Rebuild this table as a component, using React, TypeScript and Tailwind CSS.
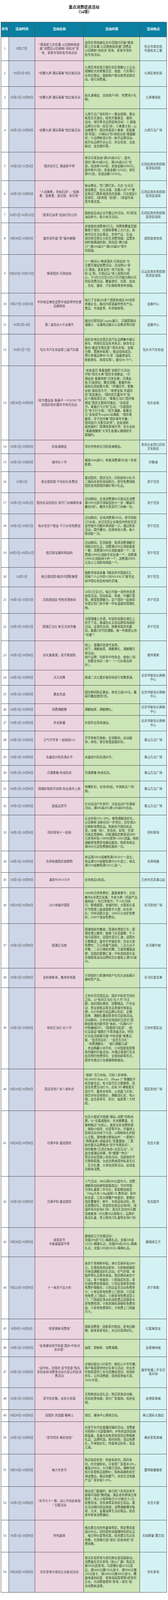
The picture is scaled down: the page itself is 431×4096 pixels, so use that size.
type Row = {
  d: string;
  n: string[];
  c: string[];
  l: string[];
  h: string;
};

const D8 = "10月1日-10月8日";
const HL = ["北京华联包头购物", "中心"];
const SG = ["石拐区商务和招商", "投资促进局"];
const QW = "青山万达广场";

const ROWS: Row[] = [
  {
    d: "9月27日",
    n: ["“情系职工办实事·以旧换新助发", "展”消费品以旧换新“进机关”家", "电、家装专项补贴专场活动"],
    c: ["会同东鸽电器在全市范围内开展“情系", "职工办实事·以旧换新助发展”消费品", "以旧换新“进机关”家电、家装专项补", "贴专场活动。"],
    l: ["包头市商务局", "市直机关工委"],
    h: "h-[61.2px]",
  },
  {
    d: "10月1日-8日",
    n: ["“欢腾九原 潮玩青春”商文娱活动"],
    c: ["九原区商务局已面向全区限额以上企业，", "规模较大的零售百货、商超、汽车等行", "业发出倡议，鼓励商户推出各类促销活", "动，吸引消费者。"],
    l: ["九原区商务局"],
    h: "h-[65.1px]",
  },
  {
    d: D8,
    n: ["“欢腾九原 潮玩青春”商文娱活动"],
    c: ["街头演唱会、全街商户9折、免费领小礼", "物。"],
    l: ["九原横竖街"],
    h: "h-[57.6px]",
  },
  {
    d: D8,
    n: ["“欢腾九原 潮玩青春”商文娱活动"],
    c: [
      "九原万达广场利用十一黄金假期，推出",
      "各类文艺演出，结合开展珠宝、服饰、",
      "运动、餐饮等全品类促销活动：① 超级",
      "品牌日计划—低至5折；②美食计划—心",
      "动美食节：国庆特惠双人套餐、家庭套",
      "餐7折起；③嗨玩计划-体验业态 储值翻",
      "倍；④品牌新锐计划—新开品牌活动，",
      "新开业品牌开业仪式、异业导流、业态",
      "联动、会员邀约等。",
    ],
    l: ["九原万达广场"],
    h: "h-[110.6px]",
  },
  {
    d: "10月1日-11月4日",
    n: ["国庆欢乐汇·满减享不停"],
    c: ["单次可享加油“满200减20元”；超市、", "餐饮“满100减10元、满200减20元”优", "惠，加油券1000张，发放金额20000元；", "超市券952张，发放金额13150元；餐饮", "券952张，发放金额13150元。"],
    l: SG,
    h: "h-[73.4px]",
  },
  {
    d: D8,
    n: ["“人间美食，寻味石拐”—“逛美", "景、尝美食、惠住宿、享乐购”"],
    c: ["联动景区，凭门票打折。凡在“五当召", "旅游景区、包头古城、花舞人间”3个景", "区购买门票参观游览的游客，可在我区8", "家餐饮、4家宾馆（民宿）、1家超市享", "受专属优惠。"],
    l: SG,
    h: "h-[68.8px]",
  },
  {
    d: "10月1日-10月31日",
    n: ["“惠享石油季”加油打折让利"],
    c: ["鼓励成品油企业开展让利活动，共5家加", "油站参与，助力本次活动。"],
    l: SG,
    h: "h-[39.2px]",
  },
  {
    d: "9月30日-10月6日",
    n: ["盛世迎华诞“芪”福共婵娟"],
    c: ["发放政府消费券8万元。消费券覆盖范围", "聚焦于餐饮、住宿和零售三大行业，具", "体涉及生活必需品、农特产品、石油、", "餐饮和住宿五大民生消费领域；设置多", "档阶梯满减机制，拟包括“满50减", "10”“满100减20”“满200减40”等不", "同层级。"],
    l: ["固阳县商务局"],
    h: "h-[81px]",
  },
  {
    d: "9月25日-10月15日",
    n: ["畅享国庆·乐购金秋"],
    c: ["十一期间以“畅享国庆·乐购金秋”为", "主题开展促销费活动，活动将以“多‘", "元’满减，惠享金秋” 线下促销、“金", "秋‘云’购，乐购白云”线上抢购为核", "心，于9月25日至10月15日开展为期20天", "的促消费活动，覆盖餐饮、住宿、加油", "、洗浴、健身、汽车换购等多种领域。"],
    l: ["白云区商务和招商", "投资促进局"],
    h: "h-[98.7px]",
  },
  {
    d: "9月27日-10月5日",
    n: ["中外商品博览会暨羊绒皮草特色食", "品展销会"],
    c: ["吸引了全球200多个国家和地区300余家", "参展企业，展出内容涵盖特色农产品、", "食品、羊绒皮草、外贸服装等。"],
    l: ["会展中心"],
    h: "h-[58.3px]",
  },
  {
    d: "10月3日-4日",
    n: ["第二届包头A卡动漫节"],
    c: ["展出内容包括Cosplay展示、汉服国潮动", "漫展示、动漫周边展示以及售卖等内容", "。"],
    l: ["会展中心"],
    h: "h-[46.9px]",
  },
  {
    d: "10月1日-7日",
    n: ["包头市汽车协会第三届汽车展"],
    c: ["组织本地及全国主流汽车品牌集中展示", "新车、热销车型及技术亮点；联合车企", "推出“展会专属优惠”（购车补贴、金融", "分期、置换补贴等），推动现场成交。", "预计参展品牌40-50 家（涵盖燃油车、", "新能源车、商用车等），展位60-70个。"],
    l: ["包头市汽车协会"],
    h: "h-[81px]",
  },
  {
    d: "9月30日-10月8日",
    n: ["“双节遇金街·青春不一YOUNG”中", "秋国庆奇妙嘉年华系列活动"],
    c: [
      "“金街逐月 青春留影”拍照打卡活动；",
      "中秋“拜月大典”国风专场晚会；“月",
      "满金街·青春饼韵”月饼长廊；月满金",
      "街·灯谜驿站；舞炫觉醒，青春炸场--",
      "高校社团街舞大赛；“声耀芳华，歌聚",
      "金街”高校音乐节；“筑梦金街 华诞同",
      "庆”巡游演出；“国庆欢乐嘉年华”街",
      "区人偶巡游互动；“青春正当红 国庆嗨",
      "唱会”国庆主题系列演出；“金街双",
      "节，青春打卡计划”互动；“为祖国庆",
      "生”电子打卡墙；“双节漫趣，青春次",
      "元”金街双节cosplay动漫展；“国庆青",
      "春季，学子创市集”国庆青年市集；“",
      "国风快闪·光影狂欢秀”；金街宠粉、",
      "高校福利！国潮电竞嗨不停；包头金街",
      "“青春微醺夜”大学生叁遛火塘酒吧专",
      "属福利。",
    ],
    l: ["包头金街"],
    h: "h-[190.3px]",
  },
  { d: D8, n: ["民俗演唱会"], c: ["举办传统老东河民俗演唱会。"], l: ["老包头走西口历史", "文化街区"], h: "h-[35px]" },
  { d: D8, n: ["城市红人节"], c: ["服装1000减50；单笔消费满500送一张电", "影票。"], l: ["印象城"], h: "h-[45.5px]" },
  {
    d: "10月1日",
    n: ["表白我的国-千份好礼免费送"],
    c: ["喜迎国庆，国庆当天，扫码商场小红书", "二维码并发布现场照片，即可免费领取", "国庆发饰即国庆胸针等小礼品。"],
    l: ["苏宁百货"],
    h: "h-[53.8px]",
  },
  {
    d: "10月1日-10月3日",
    n: ["国庆好运刮刮乐-双开门冰箱等你来"],
    c: ["活动期间，全场消费满99元珠宝区消费", "满1999元即可领取刮刮卡一张（最高可", "叠加3张），最终大奖双开门冰箱一台。"],
    l: ["苏宁百货"],
    h: "h-[54.1px]",
  },
  {
    d: "10月1日-10月3日",
    n: ["和水母交个朋友-千只水母免费送"],
    c: ["活动期间，全场消费满199元，即可领取", "1只水母，关注百货企业微信并转发百货", "宣传图片可额外再领取一只，通过转发", "活动，提升曝光，仅限单张小票，每人", "限领取一次。"],
    l: ["苏宁百货"],
    h: "h-[63.7px]",
  },
  {
    d: "10月1日-10月31日",
    n: ["假日珠宝福利再加码"],
    c: ["活动期间，百货联营、租赁消费满额可", "领取对应礼品，消费满2999元领取香薰", "一套；消费满5999元领取福袋一个；消", "费满12999元领取羊驼玩偶一个；消费满", "19999元领取榨汁杯一个；消费满29999", "元及以上领取电烤盘一个。"],
    l: ["苏宁百货"],
    h: "h-[73.6px]",
  },
  {
    d: "10月1日",
    n: ["表白我的国-微笑中国影像馆"],
    c: ["摄影师现场采集【微笑的中国面孔】，", "用每个人心中的“CHINA FACE”赋予这", "抹中国红有血有肉的灵魂。"],
    l: ["苏宁百货"],
    h: "h-[49.8px]",
  },
  {
    d: "10月1日-10月3日",
    n: ["古韵游园会 传统非遗体验"],
    c: ["10月1日至3日，每日开展一项传统非遗", "体验活动，包括拓染、串珠、竹编灯笼", "等，感受国潮魅力，这个国庆一起体验", "非遗文创门亲手做一件有温度的国潮礼", "物。"],
    l: ["苏宁百货"],
    h: "h-[68px]",
  },
  {
    d: "10月1日-10月3日",
    n: ["国潮正当红-新生文创市集"],
    c: ["当国潮撞上非遗，年轻的创意在摊位上", "炸开了花，邀请包头文创品牌现场组织", "活动，这里的文创，带着老祖宗的基", "因，裹着Z世代的潮酷，每一件都想让你", "“哇塞”！"],
    l: ["苏宁百货"],
    h: "h-[70px]",
  },
  {
    d: D8,
    n: ["好礼聚奥莱，双节莱就购"],
    c: ["线上：直播间发放代金券。", "线下：满额抽奖、满额赠礼、满额赠月", "饼活动。", "商户品牌：利郎年中特卖会、绫致1.5折", "、劲霸全场买一送一（一口价商品除", "外）。"],
    l: ["奥特莱斯"],
    h: "h-[75.1px]",
  },
  { d: D8, n: ["次元宅舞"], c: ["邀请二次元爱好者到场进行宅舞表演。"], l: HL, h: "h-[39.5px]" },
  { d: D8, n: ["黄金克减"], c: ["国庆期间购买黄金，单克立减100元，最", "高可叠加使用5克。"], l: HL, h: "h-[46.9px]" },
  { d: D8, n: ["消费满额赠"], c: ["满额抽奖、满额赠礼。"], l: HL, h: "h-[29.8px]" },
  { d: D8, n: ["异业联盟"], c: ["外部异业现场演出。"], l: HL, h: "h-[40.2px]" },
  { d: D8, n: ["元气开学季 一起轻松GO"], c: ["开学季新生焕新，全场数码，运动服", "饰，体验，餐饮享受超值折扣。"], l: [QW], h: "h-[46.6px]" },
  { d: D8, n: ["永盛成99狂欢酒水节"], c: ["永盛成99狂欢酒水节。"], l: [QW], h: "h-[41.1px]" },
  { d: D8, n: ["月满食集·秋味狂欢"], c: ["月满食集·秋味狂欢。"], l: [QW], h: "h-[39.9px]" },
  { d: D8, n: ["国潮好物双节欢购·秋出清冬上新"], c: ["惊爆折扣，全场4折起，冬装新品7.5折", "购。"], l: [QW], h: "h-[42.4px]" },
  { d: D8, n: ["超级品类节"], c: ["针对运动户外系列：洽谈运动户外满减", "活动，满600减200/满1200减400活动。"], l: [QW], h: "h-[44.4px]" },
  {
    d: D8,
    n: ["同利家电十一促销"],
    c: ["企业补贴15%~20%，套购满额送好礼，", "以旧换新 送新拉旧一步到位，旧空调以", "旧换新免费拆运。购新机不限旧机品", "类，冰箱（柜）、洗衣机、彩电、空调", "可跨品类换新。办联通指定套餐送2800", "元家电补贴+1000M宽带+100G流量。购机", "满额享免费家电搬运服务。购家电单品", "满3000元送免费移机服务一次。"],
    l: ["同利家电"],
    h: "h-[92px]",
  },
  {
    d: D8,
    n: ["东鸽电器国庆放肆购"],
    c: ["单品满10010或套购满10010十一选五；", "单品满5010或套购满5010七选三；单品", "满1010或套购满1010三选一。"],
    l: ["东鸽电器"],
    h: "h-[55.7px]",
  },
  { d: D8, n: ["漫游NON-STOP"], c: ["全场商品6折起。"], l: ["王府井百货青山店"], h: "h-[39px]" },
  {
    d: "9月19日-10月8日",
    n: ["2025幸福中国家"],
    c: ["1000份月饼免费吃；露营美食节；文创", "集市&非遗文化展；丰收大典（农副产品", "展销会）；秋日茶咖节；千人红河快", "闪；歌唱祖国，幸福时刻；大窑街头音", "乐节暨第三届谁是歌手大赛；机车排", "队；中秋诗歌大会；1000只小龙虾免费", "吃；1000个烧卖免费吃。"],
    l: ["东河吾悦广场"],
    h: "h-[91.3px]",
  },
  {
    d: D8,
    n: ["国潮正当燃"],
    c: ["国潮戏剧市集图；国潮非遗鱼灯车；国", "潮非遗火舞秀；敦煌飞天凤凰舞；千人", "快闪迎国庆；迎国庆音乐汇演；迎国庆", "主题晚会；盛世中华烟花秀；百米大串", "免费吃；万元惊喜气球雨；二次元谷子", "市集；二次元随机宅舞；王者荣耀挑战", "赛；迎国庆歌舞汇演；中秋游园音乐会", "全城独享运动品牌成交价基础上满500减", "50。"],
    l: ["东河摩尔城"],
    h: "h-[114px]",
  },
  {
    d: D8,
    n: ["金秋换新季，集单有惊喜"],
    c: ["计划组织13家建材商户在包头金街展示", "建材类产品。"],
    l: ["东河红星佳美"],
    h: "h-[50.5px]",
  },
  {
    d: D8,
    n: ["有你正当红-红人节"],
    c: [
      "王府井百货昆区店，国庆中秋双节同庆",
      "之际，以“有你正当红-红人节”为主",
      "题，组织国际美妆、轻奢精品、户外运",
      "动、男女装鞋品等全品类城市独享品",
      "牌，2025年新引进品牌以折扣、买赠、",
      "团券、满额礼叠加等多形式促销活动。",
      "活动期间，王府井现场组织沉浸式“国",
      "粹皮影戏光影传奇”体验，“月满FUN”",
      "中秋糖画DIY、“国潮快闪巡游”、“超",
      "红见面会”摄影打卡等流量活动，特别",
      "针对会员顾客开展“中秋家宴”美食品",
      "鉴、“会员到店礼”、“会员生日礼”",
      "、“消费满额礼”、“银行满额立减”",
      "、幸运畅赢小米手机、小米智能家居等",
      "系列福利升级活动，并通过滴滴打车及",
      "会员预约免费停车、全城包邮等形式，",
      "提供专属出行及便捷购物服务。",
    ],
    l: ["王府井昆区店"],
    h: "h-[207.5px]",
  },
  {
    d: "9月19日-10月8日",
    n: ["昆区吾悦广场 5 周年庆"],
    c: ["“怒砸” 百万补贴，可抢 5 折神券，", "HUAWEI Mate XT、iPhone 17 等爆款手", "机货量充足；有卡皮巴拉主题美陈、巡", "游及免费互动打卡，还有 3D 裸眼星光", "音乐节、魔术杂技秀、火凤凰飞天秀；", "餐饮对标全网底价，满额送礼包、电火", "锅，会员享停车、积分、抽奖等 7 大特", "权。"],
    l: ["昆区吾悦广场"],
    h: "h-[107px]",
  },
  {
    d: "9月26日-10月8日",
    n: ["月满中秋 喜迎国庆"],
    c: [
      "包百大楼双节搭建“潮玩+消费”的购场",
      "景，以“全渠道融合、全场景覆盖、全",
      "客群触达”为核心，激发全民消费热情",
      "，借助小程序、抖音等平台，开展线上",
      "促销活动为线下引流，以购物有礼的核",
      "心主题，落地爆点营销动作：一是推行",
      "“购物返券+逐级送礼”双重激励；二是",
      "联合重点品牌推出“双节专属折扣”，",
      "同时聚焦“沉浸式体验+全民互动”，打",
      "造全域潮玩场景，将“嫦娥”“李白”",
      "等文化标签融入现场活动，深度体验节",
      "日营销氛围，为会员群体提供私享车位",
      "、生日礼遇、大单加送等活动，促进会",
      "员群体消费。",
    ],
    l: ["包百大楼"],
    h: "h-[168.3px]",
  },
  {
    d: D8,
    n: ["月满中秋 喜迎国庆"],
    c: [
      "人气活动：480元购500元超市卡，消费",
      "满额再加码换购超值商品！节庆特惠：",
      "月饼礼盒第二件半价；家庭粮油组合",
      "（10kg大米+10kg面粉+5L食用油）享88",
      "折优惠；江苏大闸蟹产地直供，更赠实",
      "用吃蟹套件；鲜牛、羊肉现场试吃，购",
      "买即赠好礼；家居家纺商品全场8折；保",
      "温杯系列全场8.5折；清洁礼包仅88元赠",
      "洗漱套装 / 99元赠30元购物卡；品牌护",
      "肤品礼盒、男士剃须刀礼盒等全场8.5折",
      "。",
    ],
    l: ["包百超市"],
    h: "h-[131.2px]",
  },
  {
    d: "9月26日-10月8日",
    n: ["阅享双节", "书香盛宴惠不停"],
    c: ["鹿城阅立方充值活动：", "充值300送75元+精美礼品；充值500送", "125元+精美礼品；充值800送200元+精美", "礼品；充值1200送300元+精美礼品。"],
    l: ["鹿城阅立方"],
    h: "h-[75.4px]",
  },
  {
    d: "9月22日-10月8日",
    n: ["十一来苏宁玩大的"],
    c: [
      "来苏宁享换新补贴，单价至高补贴2000",
      "元，无需抢券到店即补；凡购物顾客即",
      "可参加满额送好礼活动，空气炸锅、体",
      "脂秤等礼品等你来拿。国庆期间来苏宁",
      "门店，享十兔服务：①购指定机型，享",
      "空调免费安装服务；②到店享换季衣物",
      "免费护理服务；③到店会员活动免费参",
      "与；④老旧家电免费上门检测；⑤旧家",
      "电免费上门拖旧；⑥新家电免费送货上",
      "门；⑦购指定净水机送前置过滤器享水",
      "质免费检测；⑧购洗碗机享橱柜免费改",
      "造；⑨家电免费寄存；⑩免费上门测量",
      "尺寸。",
    ],
    l: ["苏宁易购"],
    h: "h-[158.8px]",
  },
  {
    d: "9月8日-10月8日",
    n: ["“家居焕新消费季”"],
    c: ["焕新消费季：团新家内购会；家电达额", "赠；联单享家电礼；关注抖音得好礼。"],
    l: ["红星美凯龙"],
    h: "h-[51.4px]",
  },
  {
    d: D8,
    n: ["“金荣建材双节钜惠 国庆•中秋共", "庆丰收”"],
    c: ["抽奖、购物券、消费满赠。"],
    l: ["金荣建材城"],
    h: "h-[45.6px]",
  },
  {
    d: D8,
    n: ["“迎中秋，庆国庆 双节钜惠”购车", "折扣金秋消费季活动大型让利促消", "费活动"],
    c: ["全城出租车LED宣传；微信公众号传播；", "商户每家提供特价车参与活动；异业合", "作商家提供三年无忧赠送项目；现场秒", "杀车，让利消费者；现场签单抽大奖，", "100%中奖。"],
    l: ["盛世恒通二手车交", "易市场"],
    h: "h-[79.2px]",
  },
  {
    d: D8,
    n: ["双节狂欢聚，金秋大钜惠"],
    c: ["无购物进店送礼品；购买家具送冰箱、", "洗衣机等电器；部分厂家直销，低折促", "销。"],
    l: ["金港家具城"],
    h: "h-[55.9px]",
  },
  {
    d: "9月29日-10月8日",
    n: ["迎国庆·庆团圆·聚稀土"],
    c: ["餐饮、康体中心营销活动。"],
    l: ["稀土国际大酒店"],
    h: "h-[30.3px]",
  },
  {
    d: D8,
    n: ["“双节同庆·美好加倍”"],
    c: ["抖音平台开启直播间福利活动，消费者", "可抢购0.1元超值福利，并有机会到店抽", "取盲盒，盲盒内含各类家居用品等精美", "礼品；品牌特惠，限时抢购；进店免费", "礼，开单抢好礼；特惠单品秒杀，现金", "立减。"],
    l: ["美好家家具城"],
    h: "h-[83.5px]",
  },
  {
    d: "9月10日-10月8日",
    n: ["格力专卖节"],
    c: ["购买指定机型：悦省电系列，国风系", "列，时光锦柜机，可享受厂家直补20%，", "最高2000元；AI冷静王挂机，臻鲜风柜", "机可享受新品尝鲜价；购新高端柜机空", "调送赠品，精品电暖气；冰洗生活电器", "产品厂家补贴5-10%。"],
    l: ["董明珠健康家"],
    h: "h-[83.2px]",
  },
  {
    d: D8,
    n: ["“岁月七十一载，初心不改赴新程", "” 主题活动"],
    c: ["推出低门槛福利，每日前71名进店老年", "顾客可领取7颗鸡蛋，满足老年群体日常", "需求；线上小程序每日10:00推出 0.1元", "抢食用油、洗衣液等实用民生用品，需", "在活动期内到店核销；消费满额赠羊脂", "皂、大米、金鹿油等生活必需品，贴合", "老年群体消费偏好。"],
    l: ["东百大楼"],
    h: "h-[85.7px]",
  },
  {
    d: D8,
    n: ["特色宴席"],
    c: ["推出蒙古包特色宴席预定，预定费用直", "减2000元，同时提供充值赠特色奶礼品", "、每日特价菜等优惠，结合蒙古包文化", "场景，为游客打造“餐饮+民俗体验”消", "费场景。"],
    l: ["天成御宴·蒙古包"],
    h: "h-[82.1px]",
  },
  {
    d: "9月28日-10月8日",
    n: ["京东家电与餐饮企业联动活动"],
    c: ["首次实现家电与餐饮跨业态深度联动，", "消费者在京东家电（耐火厂路）购买任", "意500元起家电，可获赠价值29.9元菜", "品，满3000元赠159元餐卡、满5000元赠", "259元餐卡、满10000元赠499元餐卡，覆", "盖味道妈妈菜、老渔翁炖菜馆等6家餐饮", "企业，为消费者提供“家电 + 餐饮”组", "合消费新选择。"],
    l: ["京东家电"],
    h: "h-[102.5px]",
  },
];

const cols = "grid grid-cols-[20.3px_66.8px_125.6px_143.4px_69.6px]";
const cell = "flex items-center border-r border-b border-[#555] overflow-hidden";

function Lines({ lines }: { lines: string[] }) {
  return (
    <div>
      {lines.map((t, i) => (
        <div key={i} className="whitespace-pre">
          {t}
        </div>
      ))}
    </div>
  );
}

export default function App() {
  return (
    <div className="w-[431px] h-[4096px] bg-white font-['Liberation_Serif','Noto_Sans_CJK_SC',serif] text-[#3c3c3c] text-[8.1px] leading-[10.3px]">
      {/* Title */}
      <div className="h-[55.7px] pt-[13.4px] text-center text-[9.8px] leading-[11.2px] font-bold text-[#1a1a1a]">
        <div>重点消费促进活动</div>
        <div>（54项）</div>
      </div>

      {/* Table */}
      <div className="ml-[1.7px] w-[425.7px] border-t border-l border-[#555]">
        <div className={`${cols} h-[38.6px] bg-[#0a7fa2] text-white font-bold text-[8.4px]`}>
          <div className={`${cell} justify-center`}>序号</div>
          <div className={`${cell} justify-center`}>活动时间</div>
          <div className={`${cell} justify-center`}>活动名称</div>
          <div className={`${cell} justify-center`}>活动内容</div>
          <div className={`${cell} justify-center`}>活动地点</div>
        </div>

        {ROWS.map((r, i) => (
          <div key={i} className={`${cols} ${r.h}`}>
            <div className={`${cell} justify-center bg-white`}>{i + 1}</div>
            <div className={`${cell} justify-center bg-[#cdd6e7] whitespace-nowrap`}>{r.d}</div>
            <div className={`${cell} justify-center text-center bg-[#ecd3e0] text-[7.6px]`}>
              <Lines lines={r.n} />
            </div>
            <div className={`${cell} justify-start pl-[2px] bg-[#cbe5b6] text-[#34382c] text-[7.6px]`}>
              <Lines lines={r.c} />
            </div>
            <div className={`${cell} justify-center text-center bg-[#d4f2f3] text-[7.7px]`}>
              <Lines lines={r.l} />
            </div>
          </div>
        ))}
      </div>
    </div>
  );
}
